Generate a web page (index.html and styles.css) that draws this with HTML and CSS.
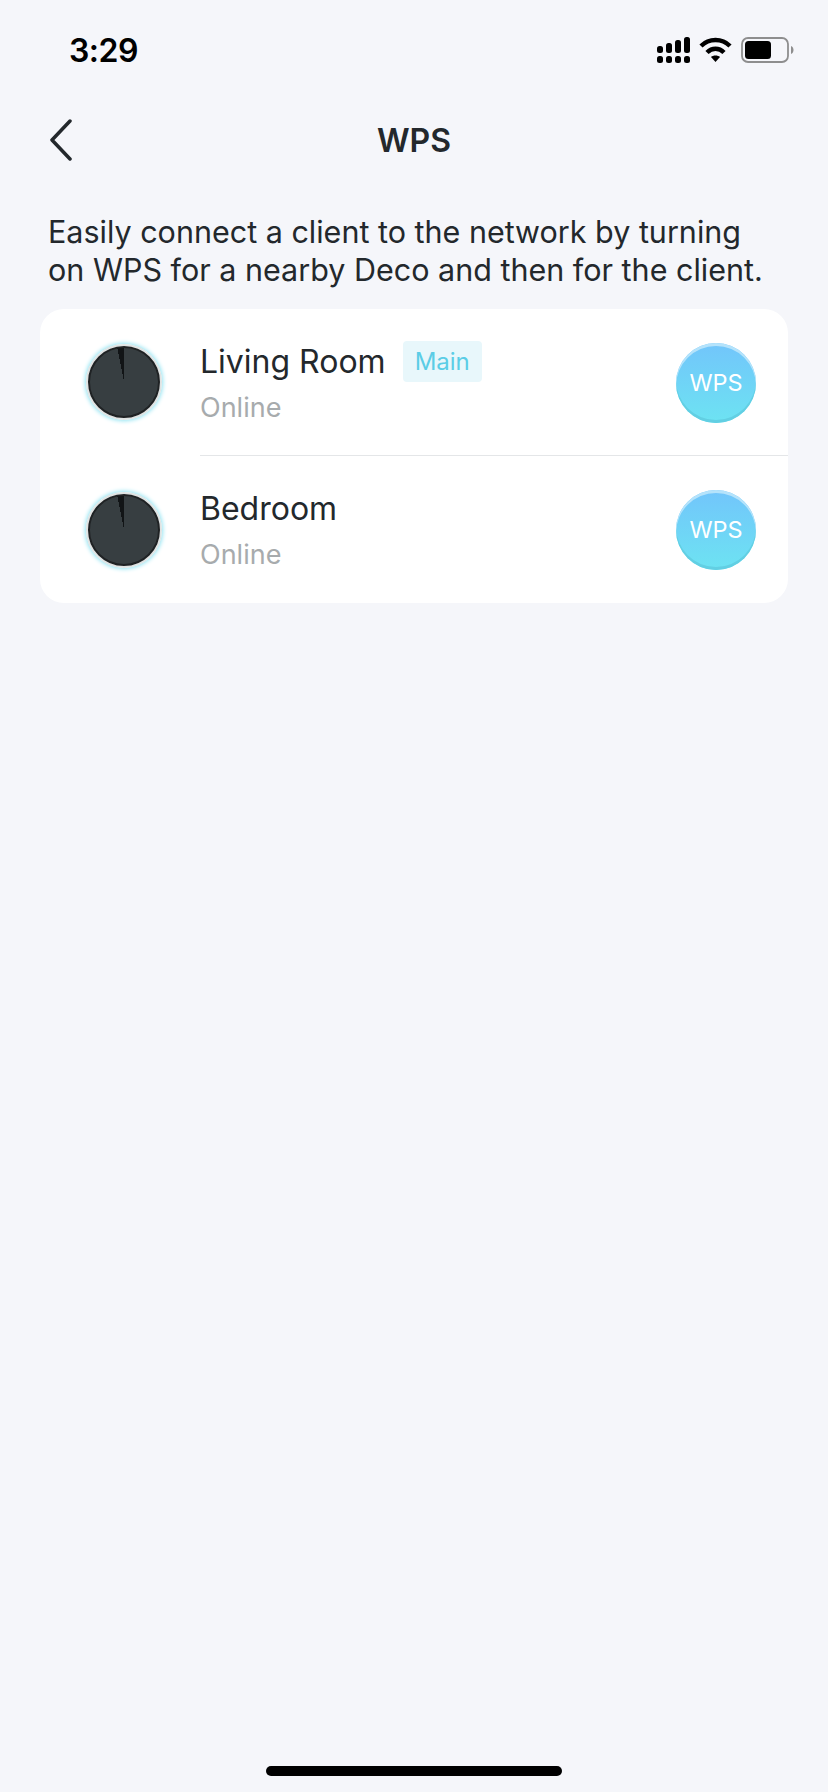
FILE: index.html
```html
<!DOCTYPE html>
<html lang="en">
<head>
    <meta charset="UTF-8">
    <meta name="viewport" content="width=device-width, initial-scale=1.0">
    <title>WPS</title>
    <link rel="stylesheet" href="styles.css">
</head>
<body>

<div class="statusbar">
    <span class="clock">3:29</span>
    <div class="status-icons">
        <svg width="33" height="26" viewBox="0 0 33 26" fill="#000">
            <rect x="0" y="9" width="6" height="7" rx="2.5"/>
            <rect x="9" y="6" width="6" height="10" rx="2.5"/>
            <rect x="18" y="3" width="6" height="13" rx="2.5"/>
            <rect x="27" y="0" width="6" height="16" rx="2.5"/>
            <rect x="0" y="19" width="6" height="7" rx="2.5"/>
            <rect x="9" y="19" width="6" height="7" rx="2.5"/>
            <rect x="18" y="19" width="6" height="7" rx="2.5"/>
            <rect x="27" y="19" width="6" height="7" rx="2.5"/>
        </svg>
        <svg class="wifi" width="33" height="26" viewBox="0 0 33 26" fill="none" stroke="#000" stroke-width="4.500">
            <path d="M2 9 C10 1 23 1 31 9"/>
            <path d="M8 15.500 C13 10.500 20 10.500 25 15.500"/>
            <path d="M12 20 L16.500 25 L21 20 C19 18 14 18 12 20 Z" fill="#000" stroke="none"/>
        </svg>
        <svg class="battery" width="53" height="26" viewBox="0 0 53 26">
            <rect x="1" y="1" width="46" height="24" rx="6" fill="none" stroke="#8e8e8e" stroke-width="1.800"/>
            <rect x="4" y="4" width="26" height="18" rx="3.500" fill="#000"/>
            <path d="M50 9 C52 10 52.500 11.500 52.500 13 C52.500 14.500 52 16 50 17 Z" fill="#8e8e8e"/>
        </svg>
    </div>
</div>

<div class="titlebar">
    <svg class="back" width="24" height="42" viewBox="0 0 24 42" fill="none" stroke="#23282c" stroke-width="3.500" stroke-linecap="round" stroke-linejoin="round">
        <path d="M21 2 L3 21 L21 40"/>
    </svg>
    <h1>WPS</h1>
</div>

<p class="intro">Easily connect a client to the network by turning on WPS for a nearby Deco and then for the client.</p>

<div class="card">
    <div class="row">
        <div class="deco"><div class="deco-face"></div></div>
        <div class="row-body">
            <div class="row-text">
                <div class="name-line">
                    <span class="name">Living Room</span>
                    <span class="tag">Main</span>
                </div>
                <div class="state">Online</div>
            </div>
            <div class="wps-btn">WPS</div>
        </div>
    </div>
    <div class="row">
        <div class="deco"><div class="deco-face"></div></div>
        <div class="row-body">
            <div class="row-text">
                <div class="name-line">
                    <span class="name">Bedroom</span>
                </div>
                <div class="state">Online</div>
            </div>
            <div class="wps-btn">WPS</div>
        </div>
    </div>
</div>

<div class="home-bar"></div>

</body>
</html>
```

FILE: styles.css
```css
html, body {
    margin: 0;
    padding: 0;
}

body {
    position: relative;
    width: 828px;
    height: 1792px;
    overflow: hidden;
    background-color: #f5f6fa;
    color: #23282c;
    font-family: Inter, "Liberation Sans", sans-serif;
}

.statusbar {
    display: flex;
    justify-content: space-between;
    align-items: center;
    height: 100px;
    padding: 0 34px 0 69px;
    box-sizing: border-box;
}

.clock {
    font-size: 32px;
    font-weight: 600;
    letter-spacing: -0.5px;
    color: #000;
}

.status-icons {
    display: flex;
    align-items: center;
    gap: 9px;
}

.titlebar {
    display: flex;
    align-items: center;
    justify-content: center;
    position: relative;
    height: 80px;
}

.back {
    position: absolute;
    left: 49px;
    top: 19px;
}

.titlebar h1 {
    margin: 0;
    font-size: 32px;
    font-weight: 600;
}

.intro {
    margin: 33px 0 0;
    padding: 0 60px 0 48px;
    font-size: 30.500px;
    line-height: 38px;
}

.card {
    margin: 20px 40px 0;
    width: 748px;
    background-color: #fff;
    border-radius: 24px;
    overflow: hidden;
}

.row {
    display: flex;
    align-items: stretch;
    height: 146px;
}

.row + .row {
    height: 148px;
}

.deco {
    flex: 0 0 auto;
    width: 76px;
    height: 76px;
    margin: 35px 0 0 46px;
    box-sizing: border-box;
    border-radius: 50%;
    border: 2px solid #dfe3e3;
    box-shadow: 0 0 4px 1px #8fe3f2;
    display: flex;
}

.row + .row .deco {
    margin-top: 37px;
}

.deco-face {
    flex: 1;
    border-radius: 50%;
    border: 2px solid #1f2224;
    background:
        conic-gradient(from -11deg, #111416 0 11deg, #373e41 11deg 360deg);
}

.row-body {
    flex: 1;
    display: flex;
    justify-content: space-between;
    margin-left: 38px;
    padding-right: 32px;
}

.row + .row .row-body {
    border-top: 1px solid #e4e6e8;
}

.row-text {
    padding-top: 30px;
}

.name-line {
    display: flex;
    align-items: center;
    gap: 17px;
    height: 44px;
}

.name {
    font-size: 32px;
}

.tag {
    background-color: #e8f7fb;
    color: #5bcde6;
    font-size: 24px;
    line-height: 41px;
    padding: 0 12px;
    border-radius: 4px;
}

.state {
    margin-top: 5px;
    font-size: 27px;
    line-height: 40px;
    color: #a7abad;
}

.wps-btn {
    flex: 0 0 auto;
    width: 80px;
    height: 80px;
    margin-top: 34px;
    box-sizing: border-box;
    border-radius: 50%;
    background: linear-gradient(#72c5fb, #6de3f2);
    box-shadow: inset 0 3px 0 #b5e3fb, inset 0 -3px 0 #62cfe3;
    color: #fff;
    font-size: 23.500px;
    line-height: 80px;
    text-align: center;
}

.home-bar {
    position: absolute;
    left: 266px;
    bottom: 16px;
    width: 296px;
    height: 10px;
    border-radius: 5px;
    background-color: #000;
}
```
